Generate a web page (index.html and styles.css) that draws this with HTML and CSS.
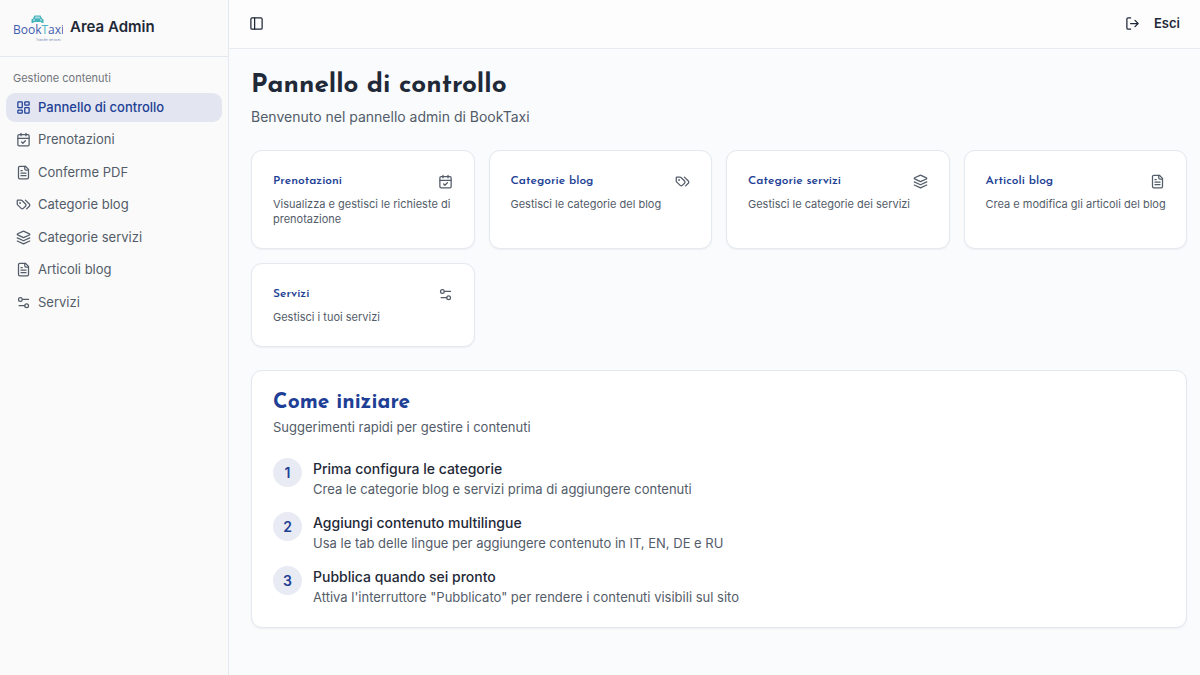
FILE: index.html
```html
<!DOCTYPE html>
<html lang="it">
<head>
    <meta charset="UTF-8">
    <meta name="viewport" content="width=device-width, initial-scale=1.0">
    <title>BookTaxi - Area Admin</title>
    <link rel="stylesheet" href="styles.css">
</head>
<body>

    <!-- Icons shared by the menu and the cards -->
    <svg class="sprite" aria-hidden="true">
        <symbol id="dashboard" viewBox="0 0 24 24"><rect x="3" y="3" width="7" height="9" rx="1"/><rect x="14" y="3" width="7" height="5" rx="1"/><rect x="14" y="12" width="7" height="9" rx="1"/><rect x="3" y="16" width="7" height="5" rx="1"/></symbol>
        <symbol id="calendar" viewBox="0 0 24 24"><path d="M8 2v4M16 2v4"/><rect x="3" y="4" width="18" height="18" rx="2"/><path d="M3 10h18M9 16l2 2 4-4"/></symbol>
        <symbol id="file" viewBox="0 0 24 24"><path d="M15 2H6a2 2 0 0 0-2 2v16a2 2 0 0 0 2 2h12a2 2 0 0 0 2-2V7Z"/><path d="M14 2v4a2 2 0 0 0 2 2h4M10 9H8M16 13H8M16 17H8"/></symbol>
        <symbol id="tags" viewBox="0 0 24 24"><path d="m15 5 6.3 6.3a2.4 2.4 0 0 1 0 3.4L17 19"/><path d="M9.586 5.586A2 2 0 0 0 8.172 5H3a1 1 0 0 0-1 1v5.172a2 2 0 0 0 .586 1.414L8.29 18.29a2.426 2.426 0 0 0 3.42 0l3.58-3.58a2.426 2.426 0 0 0 0-3.42z"/><circle cx="6.5" cy="9.5" r=".5" fill="currentColor"/></symbol>
        <symbol id="layers" viewBox="0 0 24 24"><path d="m12.83 2.18a2 2 0 0 0-1.66 0L2.6 6.08a1 1 0 0 0 0 1.83l8.58 3.91a2 2 0 0 0 1.66 0l8.58-3.9a1 1 0 0 0 0-1.83Z"/><path d="m22 17.65-9.17 4.16a2 2 0 0 1-1.66 0L2 17.65"/><path d="m22 12.65-9.17 4.16a2 2 0 0 1-1.66 0L2 12.65"/></symbol>
        <symbol id="settings" viewBox="0 0 24 24"><path d="M20 7h-9M14 17H5"/><circle cx="17" cy="17" r="3"/><circle cx="7" cy="7" r="3"/></symbol>
        <symbol id="panel" viewBox="0 0 24 24"><rect x="3" y="3" width="18" height="18" rx="2"/><path d="M9 3v18"/></symbol>
        <symbol id="logout" viewBox="0 0 24 24"><path d="M9 21H5a2 2 0 0 1-2-2V5a2 2 0 0 1 2-2h4M16 17l5-5-5-5M21 12H9"/></symbol>
    </svg>

    <div class="layout">
        <aside class="sidebar">
            <div class="sidebar-header">
                <svg class="logo" viewBox="0 0 50 28" role="img" aria-label="BookTaxi">
                    <path d="M18.500 10V6.500l1.500-1 1.500-3h6l1.500 3 1.500 1V10h-2V9h-8v1z" fill="#45b3bb"/>
                    <path d="M21.500 5.500l1-2h4l1 2z" fill="#a5dce0"/>
                    <path d="M20 7h2M27 7h2" stroke="#d9f1f3" stroke-width="1"/>
                    <text x="0" y="21" class="logo-name">Book<tspan fill="#4bb5c4">T</tspan>axi</text>
                    <text x="23" y="28" class="logo-tag">Transfer services</text>
                </svg>
                <span class="sidebar-title">Area Admin</span>
            </div>
            <nav class="menu">
                <p class="menu-label">Gestione contenuti</p>
                <ul>
                    <li><a class="menu-link active" href="#"><svg class="icon"><use href="#dashboard"/></svg>Pannello di controllo</a></li>
                    <li><a class="menu-link" href="#"><svg class="icon"><use href="#calendar"/></svg>Prenotazioni</a></li>
                    <li><a class="menu-link" href="#"><svg class="icon"><use href="#file"/></svg>Conferme PDF</a></li>
                    <li><a class="menu-link" href="#"><svg class="icon"><use href="#tags"/></svg>Categorie blog</a></li>
                    <li><a class="menu-link" href="#"><svg class="icon"><use href="#layers"/></svg>Categorie servizi</a></li>
                    <li><a class="menu-link" href="#"><svg class="icon"><use href="#file"/></svg>Articoli blog</a></li>
                    <li><a class="menu-link" href="#"><svg class="icon"><use href="#settings"/></svg>Servizi</a></li>
                </ul>
            </nav>
        </aside>

        <div class="page">
            <header class="topbar">
                <button class="toggle-button" type="button" aria-label="Menu"><svg class="icon"><use href="#panel"/></svg></button>
                <button class="logout-button" type="button"><svg class="icon"><use href="#logout"/></svg>Esci</button>
            </header>

            <main class="content">
                <h1>Pannello di controllo</h1>
                <p class="subtitle">Benvenuto nel pannello admin di BookTaxi</p>

                <div class="cards">
                    <a class="card" href="#">
                        <div class="card-top"><h3>Prenotazioni</h3><svg class="icon"><use href="#calendar"/></svg></div>
                        <p>Visualizza e gestisci le richieste di prenotazione</p>
                    </a>
                    <a class="card" href="#">
                        <div class="card-top"><h3>Categorie blog</h3><svg class="icon"><use href="#tags"/></svg></div>
                        <p>Gestisci le categorie del blog</p>
                    </a>
                    <a class="card" href="#">
                        <div class="card-top"><h3>Categorie servizi</h3><svg class="icon"><use href="#layers"/></svg></div>
                        <p>Gestisci le categorie dei servizi</p>
                    </a>
                    <a class="card" href="#">
                        <div class="card-top"><h3>Articoli blog</h3><svg class="icon"><use href="#file"/></svg></div>
                        <p>Crea e modifica gli articoli del blog</p>
                    </a>
                    <a class="card" href="#">
                        <div class="card-top"><h3>Servizi</h3><svg class="icon"><use href="#settings"/></svg></div>
                        <p>Gestisci i tuoi servizi</p>
                    </a>
                </div>

                <section class="card guide">
                    <h2>Come iniziare</h2>
                    <p class="guide-text">Suggerimenti rapidi per gestire i contenuti</p>
                    <div class="steps">
                        <div class="step">
                            <span class="step-number">1</span>
                            <div>
                                <h4>Prima configura le categorie</h4>
                                <p>Crea le categorie blog e servizi prima di aggiungere contenuti</p>
                            </div>
                        </div>
                        <div class="step">
                            <span class="step-number">2</span>
                            <div>
                                <h4>Aggiungi contenuto multilingue</h4>
                                <p>Usa le tab delle lingue per aggiungere contenuto in IT, EN, DE e RU</p>
                            </div>
                        </div>
                        <div class="step">
                            <span class="step-number">3</span>
                            <div>
                                <h4>Pubblica quando sei pronto</h4>
                                <p>Attiva l'interruttore "Pubblicato" per rendere i contenuti visibili sul sito</p>
                            </div>
                        </div>
                    </div>
                </section>
            </main>
        </div>
    </div>

</body>
</html>
```
FILE: styles.css
```css
* {
    box-sizing: border-box;
    margin: 0;
    padding: 0;
}
body {
    font-family: Inter, "Liberation Sans", sans-serif;
    font-size: 13px;
    line-height: 1.5;
    color: #1f2937;
    background: #f9fbfd;
}
h1, h2, h3 {
    font-family: "Josefin Sans", Lato, sans-serif;
    font-weight: 700;
}
a {
    color: inherit;
    text-decoration: none;
}
ul {
    list-style: none;
}
button {
    font: inherit;
    color: inherit;
    background: transparent;
    border: none;
    cursor: pointer;
}
.sprite {
    display: none;
}
.icon {
    flex: none;
    width: 15px;
    height: 15px;
    fill: none;
    stroke: currentColor;
    stroke-width: 2;
    stroke-linecap: round;
    stroke-linejoin: round;
}
.layout {
    display: flex;
    min-height: 100vh;
}
.sidebar {
    flex: none;
    width: 229px;
    background: #fafafa;
    border-right: 1px solid #e4e8ef;
}
.sidebar-header {
    display: flex;
    align-items: center;
    gap: 7px;
    height: 57px;
    padding: 0 13px 2px;
    border-bottom: 1px solid #e4e8ef;
}
.logo {
    width: 50px;
    height: 28px;
}
.logo-name {
    font-family: "Open Sans", sans-serif;
    font-size: 12px;
    fill: #3f5dae;
}
.logo-tag {
    font-size: 3px;
    fill: #7482b5;
}
.sidebar-title {
    font-size: 15px;
    font-weight: 600;
}
.menu {
    padding: 13px 6px;
}
.menu-label {
    padding: 0 7px;
    margin-bottom: 6px;
    font-size: 11px;
    color: #71757c;
}
.menu ul {
    display: grid;
    gap: 3px;
}
.menu-link {
    display: flex;
    align-items: center;
    gap: 7px;
    padding: 5px 10px;
    color: #535c69;
    border-radius: 9px;
}
.menu-link.active {
    font-weight: 500;
    color: #1e3f95;
    background: #e3e6f0;
}
.page {
    flex: 1;
    min-width: 0;
}
.topbar {
    display: flex;
    align-items: center;
    justify-content: space-between;
    height: 49px;
    padding: 0 20px 1px;
    background: #fdfdfe;
    border-bottom: 1px solid #e8ebf1;
}
.toggle-button {
    display: flex;
}
.logout-button {
    display: flex;
    align-items: center;
    gap: 14px;
    font-weight: 600;
}
.content {
    padding: 22px 13px 22px 22px;
}
h1 {
    font-size: 26px;
    line-height: 30px;
    margin-bottom: 5px;
}
.subtitle {
    margin-bottom: 22px;
    font-size: 14px;
    line-height: 22px;
    color: #535c69;
}
.cards {
    display: grid;
    grid-template-columns: repeat(4, 1fr);
    gap: 14px;
    margin-bottom: 23px;
}
.card {
    padding: 22px 21px 21px;
    background: #fff;
    border: 1px solid #e4e8ef;
    border-radius: 11px;
    box-shadow: 0 1px 2px rgba(0, 0, 0, 0.05);
}
.card-top {
    display: flex;
    align-items: center;
    justify-content: space-between;
    margin-bottom: 8px;
    color: #535c69;
}
h3 {
    font-size: 12px;
    font-weight: 600;
    line-height: 16px;
    color: #1e3f95;
}
.card p {
    color: #535c69;
}
.cards p {
    margin-right: -6px;
    font-size: 11px;
    line-height: 15px;
}
h2 {
    font-size: 21px;
    line-height: 20px;
    margin-bottom: 5px;
    color: #1e3f95;
}
.guide p {
    line-height: 18px;
}
.guide-text {
    margin-bottom: 22px;
}
.steps {
    display: grid;
    gap: 14px;
}
.step {
    display: flex;
    align-items: flex-start;
    gap: 11px;
}
.step-number {
    display: flex;
    align-items: center;
    justify-content: center;
    width: 29px;
    height: 29px;
    font-size: 14px;
    font-weight: 600;
    color: #1e3f95;
    background: #e8ebf4;
    border-radius: 50%;
}
h4 {
    font-size: 14px;
    font-weight: 500;
    line-height: 22px;
}
```
